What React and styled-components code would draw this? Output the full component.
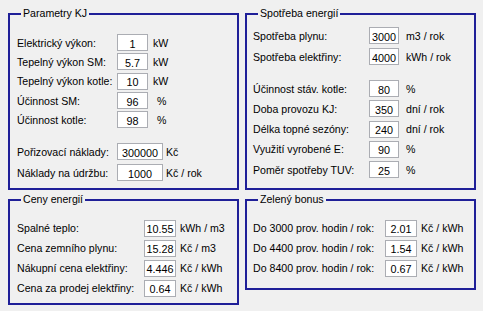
import React from "react";
import styled, { createGlobalStyle } from "styled-components";

const GlobalStyle = createGlobalStyle`
  html, body {
    margin: 0;
    padding: 0;
    background: #f0f0f0;
  }
`;

const Page = styled.div`
  width: 483px;
  height: 311px;
  box-sizing: border-box;
  padding: 7px 7px 0 8px;
  display: grid;
  grid-template-columns: 231px 231px;
  grid-template-rows: 183px auto;
  column-gap: 6px;
  row-gap: 3px;
  align-items: start;
  font-family: "Liberation Sans", Arial, sans-serif;
  font-size: 10.6px;
  color: #000;
  background: #f0f0f0;
`;

const Panel = styled.fieldset`
  margin: 0;
  min-width: 0;
  height: ${p => (p.$h ? p.$h + "px" : "auto")};
  box-sizing: border-box;
  padding: ${p => p.$pt}px 0 ${p => p.$pb}px 0;
  border: 2px solid #1f1f98;
  border-radius: 0;
  align-self: ${p => (p.$h ? "stretch" : "start")};
`;

const Legend = styled.legend`
  margin-left: 11px;
  padding: 0 2px;
  font-size: 10.6px;
  line-height: 13px;
  color: #000;
`;

const Row = styled.div`
  display: flex;
  align-items: center;
  height: ${p => p.$h}px;
  padding-left: ${p => p.$indent}px;
  white-space: nowrap;
`;

const Label = styled.span`
  width: ${p => p.$w}px;
  flex: none;
`;

const Field = styled.input`
  width: ${p => p.$w}px;
  height: 17px;
  box-sizing: border-box;
  padding: 2px 0 0;
  border: 1px solid #abadb3;
  background: #fff;
  font-family: "Liberation Sans", Arial, sans-serif;
  font-size: 10.8px;
  text-align: center;
  color: #000;
  outline: none;
  flex: none;
`;

const Unit = styled.span`
  margin-left: ${p => p.$gap}px;
`;

const Spacer = styled.div`
  height: ${p => p.$h}px;
`;

const FieldRow = ({ row, label, indent, h }) => (
  <Row $h={h} $indent={indent}>
    <Label $w={label}>{row.name}</Label>
    <Field $w={row.w} defaultValue={row.value} readOnly />
    <Unit $gap={row.gap}>{row.unit}</Unit>
  </Row>
);

const kjMain = [
  { name: "Elektrický výkon:", value: "1", unit: "kW", w: 31, gap: 5 },
  { name: "Tepelný výkon SM:", value: "5.7", unit: "kW", w: 31, gap: 5 },
  { name: "Tepelný výkon kotle:", value: "10", unit: "kW", w: 31, gap: 5 },
  { name: "Účinnost SM:", value: "96", unit: "%", w: 31, gap: 9 },
  { name: "Účinnost kotle:", value: "98", unit: "%", w: 31, gap: 9 },
];

const kjCost = [
  { name: "Pořizovací náklady:", value: "300000", unit: "Kč", w: 46, gap: 3 },
  { name: "Náklady na údržbu:", value: "1000", unit: "Kč / rok", w: 46, gap: 3 },
];

const useMain = [
  { name: "Spotřeba plynu:", value: "3000", unit: "m3 / rok", w: 30, gap: 7 },
  { name: "Spotřeba elektřiny:", value: "4000", unit: "kWh / rok", w: 30, gap: 7 },
];

const useOther = [
  { name: "Účinnost stáv. kotle:", value: "80", unit: "%", w: 30, gap: 7 },
  { name: "Doba provozu KJ:", value: "350", unit: "dní / rok", w: 30, gap: 7 },
  { name: "Délka topné sezóny:", value: "240", unit: "dní / rok", w: 30, gap: 7 },
  { name: "Využití vyrobené E:", value: "90", unit: "%", w: 30, gap: 7 },
  { name: "Poměr spotřeby TUV:", value: "25", unit: "%", w: 30, gap: 7 },
];

const prices = [
  { name: "Spalné teplo:", value: "10.55", unit: "kWh / m3", w: 32, gap: 4 },
  { name: "Cena zemního plynu:", value: "15.28", unit: "Kč / m3", w: 32, gap: 4 },
  { name: "Nákupní cena elektřiny:", value: "4.446", unit: "Kč / kWh", w: 32, gap: 4 },
  { name: "Cena za prodej elektřiny:", value: "0.64", unit: "Kč / kWh", w: 32, gap: 4 },
];

const bonus = [
  { name: "Do 3000 prov. hodin / rok:", value: "2.01", unit: "Kč / kWh", w: 32, gap: 4 },
  { name: "Do 4400 prov. hodin / rok:", value: "1.54", unit: "Kč / kWh", w: 32, gap: 4 },
  { name: "Do 8400 prov. hodin / rok:", value: "0.67", unit: "Kč / kWh", w: 32, gap: 4 },
];

const App = () => {
  return (
    <>
      <GlobalStyle />
      <Page>
        <Panel $pt={13} $pb={0} $h={183}>
          <Legend>Parametry KJ</Legend>
          {kjMain.map(r => <FieldRow key={r.name} row={r} label={100} indent={7} h={19.3} />)}
          <Spacer $h={12} />
          {kjCost.map(r => <FieldRow key={r.name} row={r} label={100} indent={7} h={21} />)}
        </Panel>
        <Panel $pt={5} $pb={0} $h={183}>
          <Legend>Spotřeba energií</Legend>
          {useMain.map(r => <FieldRow key={r.name} row={r} label={116} indent={6} h={21} />)}
          <Spacer $h={11.4} />
          {useOther.map(r => <FieldRow key={r.name} row={r} label={116} indent={6} h={20.25} />)}
        </Panel>
        <Panel $pt={12} $pb={5}>
          <Legend>Ceny energií</Legend>
          {prices.map(r => <FieldRow key={r.name} row={r} label={127} indent={7} h={20} />)}
        </Panel>
        <Panel $pt={12} $pb={10}>
          <Legend>Zelený bonus</Legend>
          {bonus.map(r => <FieldRow key={r.name} row={r} label={132} indent={6} h={20} />)}
        </Panel>
      </Page>
    </>
  );
};

export default App;
